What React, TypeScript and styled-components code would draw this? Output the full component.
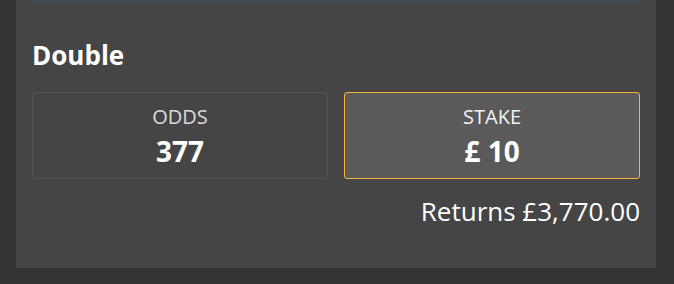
import React from "react";
import styled, { createGlobalStyle } from "styled-components";

const Global = createGlobalStyle`
  html, body {
    margin: 0;
    padding: 0;
    background: #333333;
  }
  body {
    font-family: "Open Sans", "Noto Sans", sans-serif;
    -webkit-font-smoothing: antialiased;
  }
`;

const Page = styled.div`
  display: flex;
  padding: 0 18px 0 16px;
  height: 284px;
  box-sizing: border-box;
`;

const Panel = styled.section`
  flex: 1;
  height: 268px;
  background: #454545;
  padding: 0 16px 42px;
  box-sizing: border-box;
  display: flex;
  flex-direction: column;
`;

const TopBar = styled.div`
  height: 4px;
  background: #42494e;
`;

const Heading = styled.h2`
  margin: 35px 0 0;
  font-size: 26px;
  line-height: 32px;
  font-weight: 700;
  color: #ffffff;
`;

const Boxes = styled.div`
  display: grid;
  grid-template-columns: 1fr 1fr;
  gap: 16px;
  margin-top: 21px;
`;

const Box = styled.div<{ $active?: boolean }>`
  height: 87px;
  box-sizing: border-box;
  border: 1px solid ${(p) => (p.$active ? "#f3b53a" : "#555555")};
  border-radius: 3px;
  background: ${(p) => (p.$active ? "#5a5a5b" : "#454545")};
  padding: 10px 0 9px;
  display: flex;
  flex-direction: column;
  align-items: center;
`;

const Label = styled.div<{ $active?: boolean }>`
  font-size: 20px;
  line-height: 28px;
  font-weight: 400;
  color: ${(p) => (p.$active ? "#f4f4f4" : "#dcdcdc")};
`;

const Value = styled.div`
  margin-top: 2px;
  font-size: 28px;
  line-height: 36px;
  font-weight: 700;
  color: #ffffff;
`;

const Returns = styled.div`
  margin-top: 17px;
  text-align: right;
  font-size: 26px;
  line-height: 30px;
  color: #ffffff;
`;

export default function App() {
  return (
    <>
      <Global />
      <Page>
        <Panel>
          <TopBar />
          <Heading>Double</Heading>
          <Boxes>
            <Box>
              <Label>ODDS</Label>
              <Value>377</Value>
            </Box>
            <Box $active>
              <Label $active>STAKE</Label>
              <Value>£ 10</Value>
            </Box>
          </Boxes>
          <Returns>Returns £3,770.00</Returns>
        </Panel>
      </Page>
    </>
  );
}
